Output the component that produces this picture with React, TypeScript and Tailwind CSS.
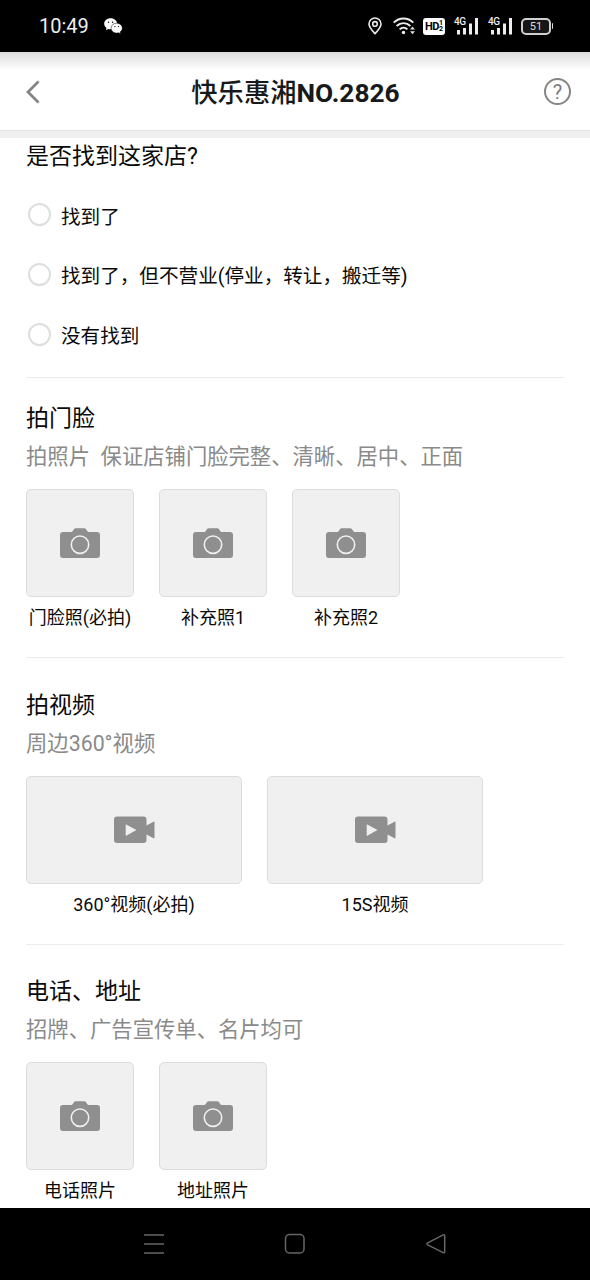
import { clsx } from "clsx";

interface CaptureItem {
  label: string;
  kind: "photo" | "video";
}

interface CaptureSectionData {
  title: string;
  hint: string;
  items: CaptureItem[];
}

const OPTIONS = ["找到了", "找到了，但不营业(停业，转让，搬迁等)", "没有找到"];

const SECTIONS: CaptureSectionData[] = [
  {
    title: "拍门脸",
    hint: "拍照片  保证店铺门脸完整、清晰、居中、正面",
    items: [
      { label: "门脸照(必拍)", kind: "photo" },
      { label: "补充照1", kind: "photo" },
      { label: "补充照2", kind: "photo" },
    ],
  },
  {
    title: "拍视频",
    hint: "周边360°视频",
    items: [
      { label: "360°视频(必拍)", kind: "video" },
      { label: "15S视频", kind: "video" },
    ],
  },
  {
    title: "电话、地址",
    hint: "招牌、广告宣传单、名片均可",
    items: [
      { label: "电话照片", kind: "photo" },
      { label: "地址照片", kind: "photo" },
    ],
  },
];

function CameraIcon() {
  return (
    <svg width="40" height="30" viewBox="0 0 40 30">
      <path
        d="M3 4h8.500c1.500 0 2.200-3.700 4-3.700h9c1.800 0 2.500 3.700 4 3.700H37a3 3 0 0 1 3 3v20a3 3 0 0 1-3 3H3a3 3 0 0 1-3-3V7a3 3 0 0 1 3-3z"
        fill="#8f8f8f"
      />
      <circle cx="20" cy="16.700" r="8.700" fill="none" stroke="#f0f0f0" strokeWidth="1.600" />
    </svg>
  );
}

function VideoIcon() {
  return (
    <svg width="41" height="28" viewBox="0 0 41 28">
      <path
        d="M3 .5h26.500a3 3 0 0 1 3 3V9.500l7-3.800c.6-.3 1 0 1 .6v15.400c0 .6-.4.900-1 .6l-7-3.800v5.500a3 3 0 0 1-3 3H3a3 3 0 0 1-3-3V3.500a3 3 0 0 1 3-3z"
        fill="#8f8f8f"
      />
      <path d="M11.700 8.200v11.800l10.800-5.900z" fill="#f0f0f0" />
    </svg>
  );
}

function WechatIcon() {
  return (
    <svg width="19" height="17" viewBox="0 0 19 17">
      <path
        d="M6.700.3C3 .3.200 2.700.2 5.800c0 1.700.9 3.200 2.300 4.200l-.6 2.200 2.400-1.300c.8.200 1.600.4 2.400.4 3.600 0 6.500-2.500 6.500-5.500S10.300.3 6.700.3z"
        fill="#fff"
      />
      <path
        d="M12.700 5.200c-3.200 0-5.700 2.200-5.700 4.900s2.500 5 5.700 5c.7 0 1.400-.1 2-.3l1.900 1.100-.5-1.900c1.300-.9 2.200-2.300 2.200-3.900 0-2.700-2.500-4.900-5.600-4.900z"
        fill="#fff"
        stroke="#000"
        strokeWidth=".5"
      />
      <g fill="#000">
        <circle cx="4.500" cy="4.200" r=".7" />
        <circle cx="8.600" cy="4.200" r=".7" />
        <circle cx="10.900" cy="8.600" r=".6" />
        <circle cx="14.500" cy="8.600" r=".6" />
      </g>
    </svg>
  );
}

function PinIcon() {
  return (
    <svg width="14" height="18" viewBox="0 0 14 18" fill="none" stroke="#e8e8e8" strokeWidth="1.600">
      <path d="M7 16.600C4.500 13.900 1 10.500 1 7a6 6 0 0 1 12 0c0 3.500-3.500 6.900-6 9.600z" />
      <circle cx="7" cy="6.900" r="2.300" />
    </svg>
  );
}

function WifiIcon() {
  return (
    <svg width="23" height="18" viewBox="0 0 23 18">
      <g fill="none" stroke="#eee" strokeWidth="1.900">
        <path d="M.7 5.600c5.700-5.400 13.900-5.400 19.600 0" />
        <path d="M3.600 9c4-3.900 9.800-3.900 13.800 0" />
        <path d="M6.600 12.400c2.300-2.200 5.500-2.200 7.800 0" />
      </g>
      <circle cx="10.500" cy="15.500" r="1.700" fill="#eee" />
      <path d="M17 12.600l2.500-3 2.500 3zM17 14.200l2.500 3 2.500-3z" fill="#ddd" />
    </svg>
  );
}

function HdBadge() {
  return (
    <span className="flex h-[17px] w-[22px] items-center justify-center rounded-[3px] bg-white font-bold text-black">
      <span className="text-[11px] leading-none tracking-[-0.5px]">HD</span>
      <span className="flex flex-col text-[7px] leading-[6.500px]">
        <span>1</span>
        <span>2</span>
      </span>
    </span>
  );
}

function Signal() {
  return (
    <span className="relative block h-[18px] w-6">
      <span className="absolute -top-px left-0 text-[10px] leading-[11px] font-medium tracking-[-0.5px] text-[#eee]">
        4G
      </span>
      <svg className="block" width="25" height="18" viewBox="0 0 25 18" fill="#eee">
        <rect x="3" y="13" width="3" height="4.500" />
        <rect x="9" y="11" width="3" height="6.500" />
        <rect x="15" y="6.500" width="3" height="11" />
        <rect x="21" y="1" width="3" height="16.500" />
      </svg>
    </span>
  );
}

function Battery() {
  return (
    <span className="flex items-center gap-px">
      <span className="flex h-[17px] w-[30px] items-center justify-center rounded-[5px] border-2 border-[#d0d0d0] bg-[#161616] text-[11px] leading-none text-[#ddd]">
        51
      </span>
      <span className="h-1.5 w-px rounded-r bg-[#ddd]" />
    </span>
  );
}

function StatusBar() {
  return (
    <div className="flex h-[52px] items-center bg-black pr-[37px] pl-[39px] text-white">
      <span className="w-[65px] text-[20px] leading-none text-[#eee]">10:49</span>
      <WechatIcon />
      <div className="ml-auto flex items-center">
        <PinIcon />
        <span className="ml-[11px]">
          <WifiIcon />
        </span>
        <span className="ml-[7px]">
          <HdBadge />
        </span>
        <span className="ml-[9px]">
          <Signal />
        </span>
        <span className="ml-2.5">
          <Signal />
        </span>
        <span className="ml-[9px]">
          <Battery />
        </span>
      </div>
    </div>
  );
}

function Header() {
  return (
    <div className="h-[86px] bg-[#efefef]">
      <header className="flex h-[79px] items-center justify-between border-b border-[#e4e4e4] bg-linear-to-b from-[#dcdcdc] to-white to-[18px] px-5">
        <div className="flex w-8 pt-px pl-1.5">
          <svg width="14" height="24" viewBox="0 0 14 24" fill="none" stroke="#858585" strokeWidth="2.800">
            <path d="M12.500 1.500 2 12l10.500 10.500" />
          </svg>
        </div>
        <h1 className="pt-[3px] text-[26.300px] leading-8 font-medium text-[#17191b]">
          快乐惠湘<span className="font-bold">NO.2826</span>
        </h1>
        <div className="-mr-px flex w-8 justify-end pt-px">
          <span className="flex size-[27px] items-center justify-center rounded-full border-2 border-[#858585] text-[20px] leading-none text-[#7c7c7c]">
            ?
          </span>
        </div>
      </header>
    </div>
  );
}

function Tile({ item }: { item: CaptureItem }) {
  const video = item.kind === "video";
  return (
    <div className={video ? "w-[216px]" : "w-[108px]"}>
      <div className="flex h-[108px] items-center justify-center rounded-[5px] border border-[#dcdcdc] bg-[#f0f0f0]">
        {video ? <VideoIcon /> : <CameraIcon />}
      </div>
      <p className="mt-[7px] text-center text-[18px] leading-7 whitespace-nowrap">{item.label}</p>
    </div>
  );
}

export default function App() {
  return (
    <div className="flex h-[1280px] w-[590px] flex-col overflow-hidden bg-white font-[Roboto,'Noto_Sans_CJK_SC',sans-serif] text-[#0a0a0a]">
      <StatusBar />
      <Header />

      <main className="flex-1 overflow-hidden px-[26px]">
        <section className="h-[240px] border-b border-[#ebebeb]">
          <h2 className="pt-[3px] text-[23px] leading-8">是否找到这家店?</h2>
          <div className="mt-3 flex flex-col">
            {OPTIONS.map((option) => (
              <label key={option} className="flex h-[59.700px] items-center gap-2.5 pl-0.5 text-[19.600px]">
                <span className="size-[23px] shrink-0 rounded-full border-2 border-[#dedede]" />
                <span className="pt-[5px]">{option}</span>
              </label>
            ))}
          </div>
        </section>

        {SECTIONS.map((section, i) => (
          <section
            key={section.title}
            className={clsx(
              "border-b border-[#ebebeb]",
              i === 0 ? "h-[280px] pt-[25px]" : "h-[286.700px] pt-[31.600px]",
            )}
          >
            <h2 className="text-[23px] leading-8">{section.title}</h2>
            <p className="mt-1.5 text-[21.330px] leading-8 whitespace-pre text-[#8a8a8a]">{section.hint}</p>
            <div className="mt-4 flex gap-[25px]">
              {section.items.map((item) => (
                <Tile key={item.label} item={item} />
              ))}
            </div>
          </section>
        ))}
      </main>

      {/* System navigation */}
      <nav className="flex h-[72px] shrink-0 items-center justify-between bg-black px-[143px]">
        <svg width="22" height="22" viewBox="0 0 22 22" stroke="#666" strokeWidth="1.500">
          <path d="M1 2h20M1 11h20M1 20h20" />
        </svg>
        <svg width="22" height="22" viewBox="0 0 22 22" fill="none" stroke="#666" strokeWidth="1.500">
          <rect x="1.500" y="1.500" width="18.500" height="18.500" rx="4" />
        </svg>
        <svg width="22" height="22" viewBox="0 0 22 22" fill="none" stroke="#666" strokeWidth="1.500">
          <path d="M18.200 1.900 2.700 9.800c-1 .6-1 1.500 0 2l15.500 7.900c.8.400 1.500 0 1.500-.9V2.800c0-.9-.7-1.300-1.500-.9z" />
        </svg>
      </nav>
    </div>
  );
}
